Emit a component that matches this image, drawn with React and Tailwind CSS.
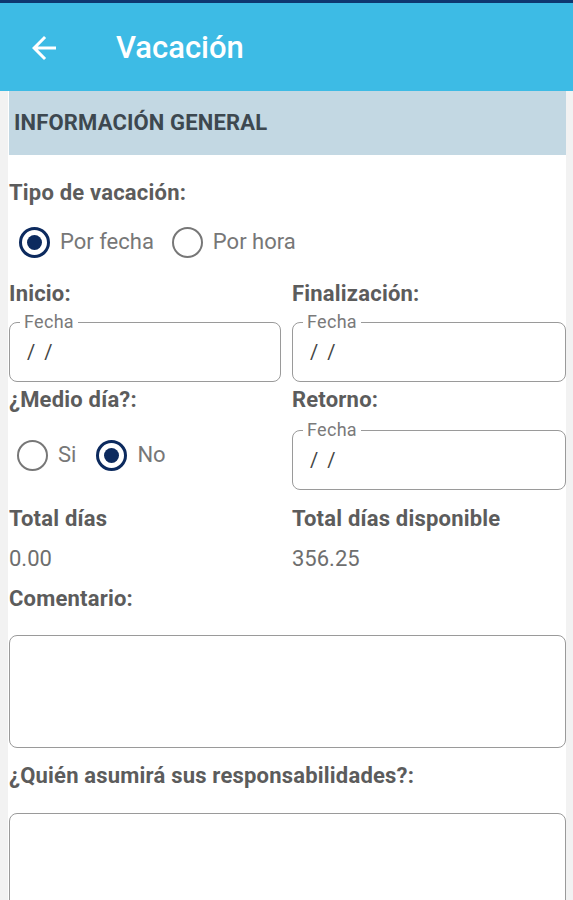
import React from "react";

const font = { fontFamily: "Roboto, 'Noto Sans', sans-serif" };

function Radio({ checked, label, className = "" }) {
  return (
    <div className={"flex items-center " + className}>
      {checked ? (
        <span className="flex h-[31px] w-[31px] items-center justify-center rounded-full border-[3px] border-[#0c2a5e]">
          <span className="h-[15px] w-[15px] rounded-full bg-[#0c2a5e]" />
        </span>
      ) : (
        <span className="h-[31px] w-[31px] rounded-full border-[2.5px] border-[#777777]" />
      )}
      <span className="ml-[10px] text-[22px] leading-[24px] text-[#777777]">{label}</span>
    </div>
  );
}

function DateBox({ className = "" }) {
  return (
    <div className={"relative flex h-[60px] items-center rounded-[8px] border-[1.5px] border-[#9a9a9a] pl-[17px] " + className}>
      <span className="absolute left-[10px] top-[-11px] bg-white px-[4px] text-[18px] leading-[20px] tracking-[0.3px] text-[#7a7a7a]">
        Fecha
      </span>
      <span className="text-[20px] leading-[24px] tracking-[2px] text-[#444444]">/ /</span>
    </div>
  );
}

function Label({ children, className = "" }) {
  return (
    <div className={"text-[22px] font-bold leading-[24px] tracking-[0.2px] text-[#5c5c5c] " + className}>{children}</div>
  );
}

export default function App() {
  return (
    <div className="flex h-[900px] w-[573px] flex-col overflow-hidden bg-[#f2f2f2]" style={font}>
      <header className="flex h-[91px] shrink-0 items-center border-t-[3px] border-[#0e3770] bg-[#3dbbe5] pt-[2px]">
        <svg className="ml-[26px]" width="36" height="36" viewBox="0 0 24 24" fill="#ffffff">
          <path d="M20 11H7.83l5.59-5.59L12 4l-8 8 8 8 1.41-1.41L7.83 13H20v-2z" />
        </svg>
        <h1 className="ml-[54px] text-[31px] font-medium leading-[36px] text-white">Vacación</h1>
      </header>

      <main className="ml-[8px] mr-[7px] flex-1 bg-white">
        <div className="ml-[1px] flex h-[64px] items-center bg-[#c3d8e3] pl-[5px]">
          <span className="text-[22px] font-bold leading-[24px] tracking-[0.15px] text-[#3d4850]">INFORMACIÓN GENERAL</span>
        </div>

        <div className="pl-[1px]">
          <Label className="mt-[26px]">Tipo de vacación:</Label>
          <div className="mt-[21px] flex h-[32px] items-center">
            <Radio checked label="Por fecha" className="ml-[10px]" />
            <Radio label="Por hora" className="ml-[18px]" />
          </div>

          <div className="mt-[24px] grid grid-cols-[272px_274px] gap-x-[11px]">
            <div>
              <Label>Inicio:</Label>
              <DateBox className="mt-[16px]" />
            </div>
            <div>
              <Label>Finalización:</Label>
              <DateBox className="mt-[16px]" />
            </div>
          </div>

          <div className="mt-[6px] grid grid-cols-[272px_274px] gap-x-[11px]">
            <div>
              <Label>¿Medio día?:</Label>
              <div className="mt-[27px] flex h-[32px] items-center">
                <Radio label="Si" className="ml-[8px]" />
                <Radio checked label="No" className="ml-[20px]" />
              </div>
            </div>
            <div>
              <Label>Retorno:</Label>
              <DateBox className="mt-[18px]" />
            </div>
          </div>

          <div className="mt-[17px] grid grid-cols-[272px_274px] gap-x-[11px]">
            <div>
              <Label>Total días</Label>
              <div className="mt-[16px] text-[22px] leading-[24px] text-[#6e6e6e]">0.00</div>
            </div>
            <div>
              <Label>Total días disponible</Label>
              <div className="mt-[16px] text-[22px] leading-[24px] text-[#6e6e6e]">356.25</div>
            </div>
          </div>

          <Label className="mt-[16px]">Comentario:</Label>
          <div className="mt-[24px] h-[113px] rounded-[8px] border-[1.5px] border-[#9a9a9a]" />

          <Label className="mt-[16px]">¿Quién asumirá sus responsabilidades?:</Label>
          <div className="mt-[25px] h-[120px] rounded-[8px] border-[1.5px] border-[#9a9a9a]" />
        </div>
      </main>
    </div>
  );
}
